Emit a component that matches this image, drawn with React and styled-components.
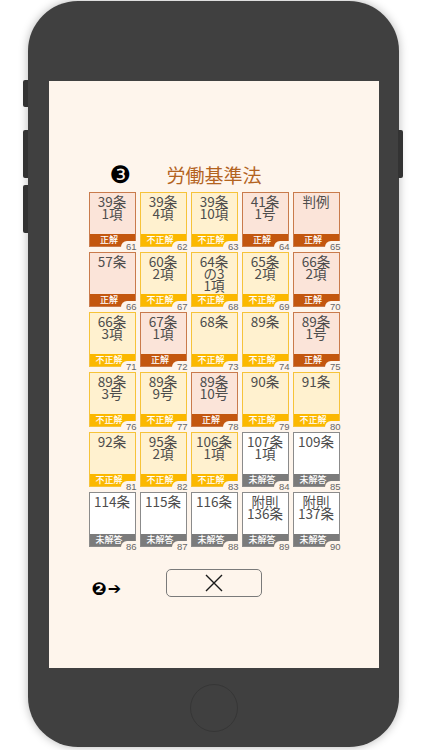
import React from "react";
import styled, { createGlobalStyle } from "styled-components";

const Global = createGlobalStyle`
  html, body { margin: 0; padding: 0; background: #ffffff; }
  body { font-family: "Noto Sans CJK JP", "Noto Sans", sans-serif; }
`;

const Page = styled.div`
  width: 422px;
  height: 750px;
  padding: 1px 0 0 28px;
  box-sizing: border-box;
  overflow: hidden;
`;

const Phone = styled.div`
  position: relative;
  width: 371px;
  height: 746px;
  box-sizing: border-box;
  background: #404040;
  border-radius: 50px;
  box-shadow: 0 0 10px rgba(0, 0, 0, 0.28);
  padding: 80px 20px 0 21px;
  display: flex;
  flex-direction: column;
  align-items: center;
`;

const SideButton = styled.div`
  position: absolute;
  width: 5px;
  background: #333;
  border-radius: ${(p) => (p.$right ? "0 2px 2px 0" : "2px 0 0 2px")};
  ${(p) => (p.$right ? "right: -4px;" : "left: -5px;")}
  top: ${(p) => p.$top}px;
  height: ${(p) => p.$h}px;
`;

const Screen = styled.div`
  width: 330px;
  height: 587px;
  background: #fef5ec;
  display: flex;
  flex-direction: column;
  align-items: center;
  padding-top: 82px;
  box-sizing: border-box;
`;

const HomeButton = styled.div`
  margin-top: 16px;
  width: 46px;
  height: 46px;
  border-radius: 50%;
  border: 1.5px solid #363636;
`;

const TitleRow = styled.div`
  width: 251px;
  display: grid;
  grid-template-columns: 1fr auto 1fr;
  align-items: center;
  height: 22px;
  margin-bottom: 7px;
`;

const Marker = styled.span`
  justify-self: start;
  padding-left: ${(p) => p.$pad}px;
  font-family: "DejaVu Sans", sans-serif;
  font-size: ${(p) => p.$size}px;
  color: #000;
  line-height: 1;
`;

const Title = styled.h1`
  margin: 0;
  font-size: 19px;
  font-weight: 400;
  color: #b3631f;
  line-height: 22px;
  letter-spacing: 0;
`;

const Grid = styled.div`
  display: grid;
  grid-template-columns: repeat(5, 47px);
  grid-auto-rows: 55px;
  column-gap: 4px;
  row-gap: 5px;
`;

const palette = {
  ok: { border: "#c97b4c", fill: "#fbe4d9", band: "#c3570f", label: "正解" },
  ng: { border: "#f6c33a", fill: "#fff1cf", band: "#fbb800", label: "不正解" },
  na: { border: "#8b8b8b", fill: "#ffffff", band: "#7b7b7b", label: "未解答" },
};

const Tile = styled.div`
  position: relative;
  box-sizing: border-box;
  border: 1.5px solid ${(p) => palette[p.$s].border};
  background: ${(p) => palette[p.$s].fill};
  display: flex;
  flex-direction: column;
`;

const TileText = styled.div`
  flex: 1;
  text-align: center;
  color: #4d4d4d;
  font-size: 13.5px;
  line-height: 11.8px;
  padding-top: 3px;
  white-space: pre-line;
`;

const Band = styled.div`
  height: 12px;
  background: ${(p) => palette[p.$s].band};
  color: #fff;
  font-size: 9px;
  font-weight: 500;
  line-height: 12px;
  text-align: center;
  padding-right: 6px;
`;

const Num = styled.span`
  position: absolute;
  right: -3px;
  bottom: -5px;
  min-width: 13px;
  height: 10px;
  padding: 0 1px 0 3px;
  background: #fef5ec;
  border-top-left-radius: 6px;
  font-family: "Liberation Sans", sans-serif;
  font-size: 9.5px;
  line-height: 11px;
  color: #666;
  text-align: right;
`;

const BottomRow = styled.div`
  width: 251px;
  margin-top: 21px;
  display: grid;
  grid-template-columns: 1fr auto 1fr;
  align-items: center;
`;

const CloseButton = styled.button`
  width: 96px;
  height: 28px;
  box-sizing: border-box;
  border: 1px solid #7a7a7a;
  border-radius: 5px;
  background: transparent;
  display: flex;
  align-items: center;
  justify-content: center;
  padding: 0;
`;

const MarkerBottom = styled(Marker)`
  padding-top: 12px;
  font-weight: 700;
  white-space: nowrap;
  display: flex;
  align-items: center;
`;

const Arrow = styled.span`
  font-size: 16px;
  margin-left: 1px;
`;

const items = [
  ["39条\n1項", "ok"], ["39条\n4項", "ng"], ["39条\n10項", "ng"], ["41条\n1号", "ok"], ["判例", "ok"],
  ["57条", "ok"], ["60条\n2項", "ng"], ["64条\nの3\n1項", "ng"], ["65条\n2項", "ng"], ["66条\n2項", "ok"],
  ["66条\n3項", "ng"], ["67条\n1項", "ok"], ["68条", "ng"], ["89条", "ng"], ["89条\n1号", "ok"],
  ["89条\n3号", "ng"], ["89条\n9号", "ng"], ["89条\n10号", "ok"], ["90条", "ng"], ["91条", "ng"],
  ["92条", "ng"], ["95条\n2項", "ng"], ["106条\n1項", "ng"], ["107条\n1項", "na"], ["109条", "na"],
  ["114条", "na"], ["115条", "na"], ["116条", "na"], ["附則\n136条", "na"], ["附則\n137条", "na"],
];

export default function App() {
  return (
    <Page>
      <Global />
      <Phone>
        <SideButton $top={79} $h={27} />
        <SideButton $top={129} $h={48} />
        <SideButton $top={184} $h={48} />
        <SideButton $right $top={129} $h={48} />
        <Screen>
          <TitleRow>
            <Marker $pad={21} $size={24}>❸</Marker>
            <Title>労働基準法</Title>
            <span />
          </TitleRow>
          <Grid>
            {items.map(([t, s], i) => (
              <Tile key={i} $s={s}>
                <TileText>{t}</TileText>
                <Band $s={s}>{palette[s].label}</Band>
                <Num>{61 + i}</Num>
              </Tile>
            ))}
          </Grid>
          <BottomRow>
            <MarkerBottom $pad={3} $size={18}>
              ❷<Arrow>➔</Arrow>
            </MarkerBottom>
            <CloseButton aria-label="閉じる">
              <svg width="20" height="20" viewBox="0 0 20 20">
                <path d="M2 2 L18 18 M18 2 L2 18" stroke="#1a1a1a" strokeWidth="1.4" fill="none" />
              </svg>
            </CloseButton>
            <span />
          </BottomRow>
        </Screen>
        <HomeButton />
      </Phone>
    </Page>
  );
}
